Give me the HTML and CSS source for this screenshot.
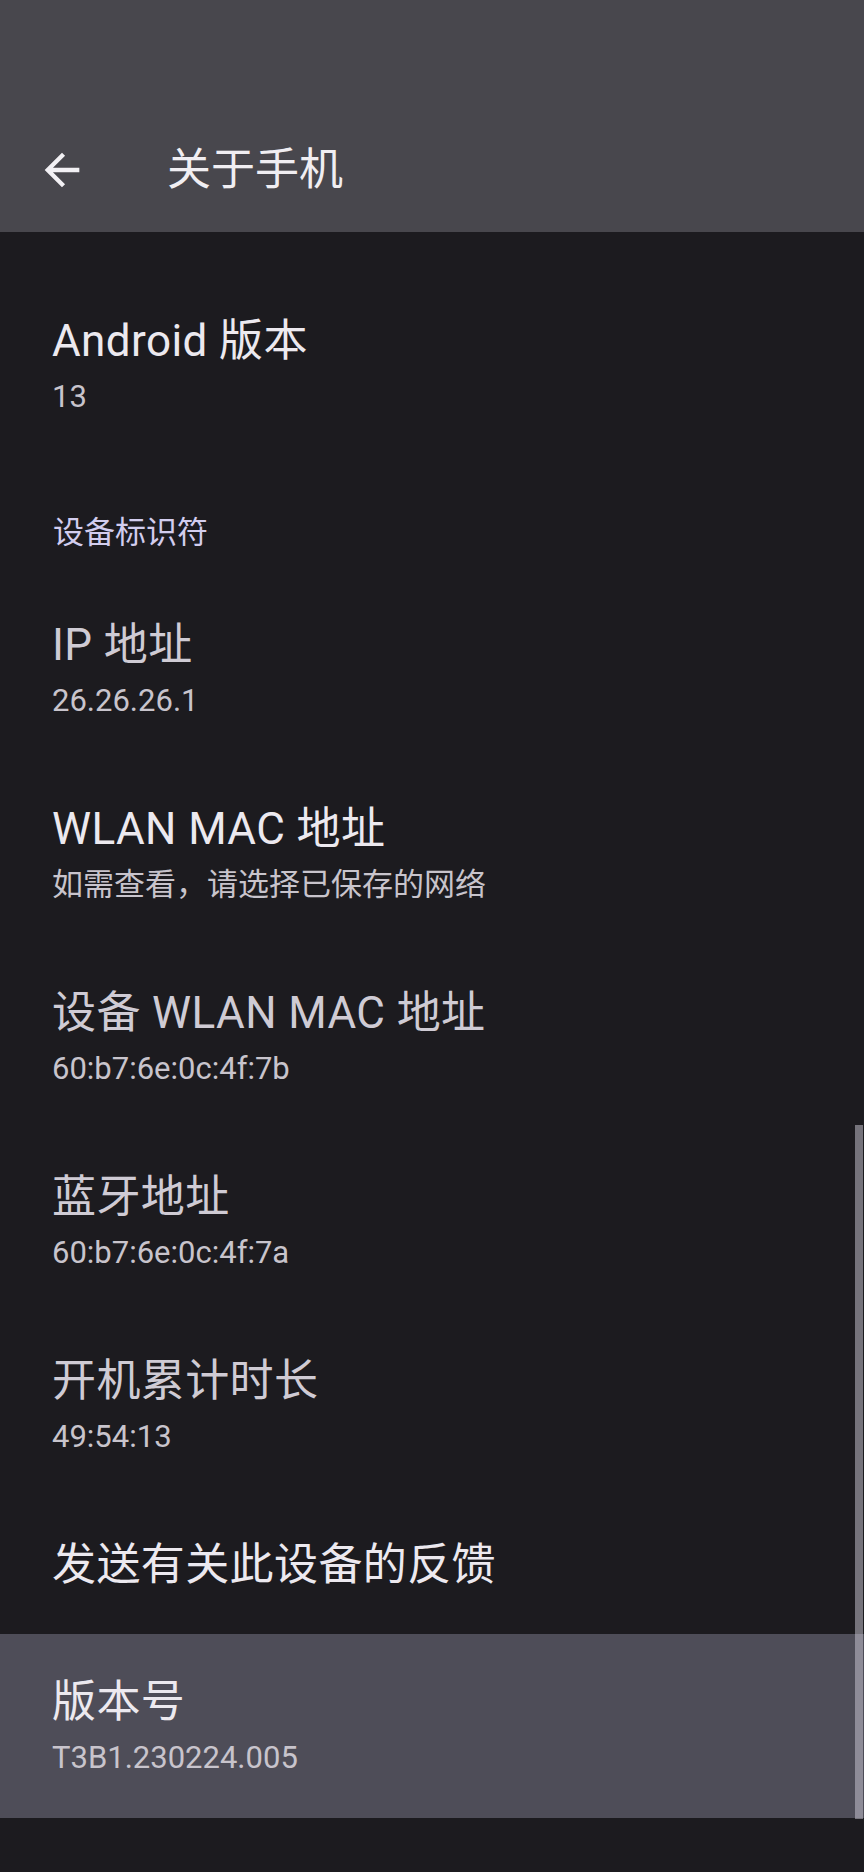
FILE: index.html
```html
<!DOCTYPE html>
<html lang="zh-CN">
<head>
<meta charset="utf-8">
<title>关于手机</title>
<link rel="stylesheet" href="styles.css">
</head>
<body>
<div class="screen">
  <header class="appbar">
    <div class="toolbar">
      <svg class="back" viewBox="0 0 24 24" aria-hidden="true"><path d="M20 11H7.83l5.59-5.59L12 4l-8 8 8 8 1.41-1.41L7.83 13H20v-2z" fill="#f2f0f4"/></svg>
      <h1 class="title">关于手机</h1>
    </div>
  </header>
  <main class="list">
    <div class="item">
      <div class="item-title bright">Android 版本</div>
      <div class="item-sub">13</div>
    </div>
    <div class="category">设备标识符</div>
    <div class="item">
      <div class="item-title dim">IP 地址</div>
      <div class="item-sub">26.26.26.1</div>
    </div>
    <div class="item">
      <div class="item-title bright">WLAN MAC 地址</div>
      <div class="item-sub">如需查看，请选择已保存的网络</div>
    </div>
    <div class="item">
      <div class="item-title dim">设备 WLAN MAC 地址</div>
      <div class="item-sub">60:b7:6e:0c:4f:7b</div>
    </div>
    <div class="item">
      <div class="item-title dim">蓝牙地址</div>
      <div class="item-sub">60:b7:6e:0c:4f:7a</div>
    </div>
    <div class="item">
      <div class="item-title dim">开机累计时长</div>
      <div class="item-sub">49:54:13</div>
    </div>
    <div class="item single">
      <div class="item-title bright">发送有关此设备的反馈</div>
    </div>
    <div class="item selected">
      <div class="item-title bright">版本号</div>
      <div class="item-sub">T3B1.230224.005</div>
    </div>
  </main>
  <div class="scrollbar"></div>
</div>
</body>
</html>
```

FILE: styles.css
```css
html, body {
  margin: 0;
  padding: 0;
  background: #1c1b1f;
}
body {
  font-family: Roboto, "Noto Sans CJK SC", sans-serif;
  width: 864px;
  min-height: 1872px;
}
.screen {
  position: relative;
  width: 864px;
  min-height: 1872px;
  background: #1c1b1f;
}
.appbar {
  height: 232px;
  background: #48474d;
  display: flex;
  flex-direction: column;
  justify-content: flex-end;
}
.toolbar {
  height: 124px;
  display: flex;
  align-items: center;
  padding-left: 36px;
}
.back {
  width: 52px;
  height: 52px;
  flex: none;
}
.title {
  margin: 0 0 0 79px;
  font-family: Roboto, "Noto Sans CJK SC", sans-serif;
  font-weight: 400;
  font-size: 44px;
  line-height: 56px;
  color: #f0eef2;
}
.list {
  padding-top: 41px;
}
.item {
  padding: 39px 40px 33px 52px;
}
.item.single {
  padding-bottom: 40px;
}
.item.selected {
  background: #4e4d58;
}
.item-title {
  font-size: 44px;
  line-height: 58px;
  letter-spacing: 0.4px;
  white-space: nowrap;
}
.item-title.bright {
  color: #ece9ef;
}
.item-title.dim {
  color: #cfcbd4;
}
.item-sub {
  font-size: 31px;
  line-height: 54px;
  color: #c8c4cc;
  white-space: nowrap;
}
.category {
  padding: 57px 40px 25px 53px;
  font-size: 31px;
  line-height: 38px;
  color: #d2cdee;
}
.scrollbar {
  position: absolute;
  right: 1px;
  top: 1125px;
  width: 8px;
  height: 694px;
  background: rgba(205, 203, 215, 0.5);
}
```
